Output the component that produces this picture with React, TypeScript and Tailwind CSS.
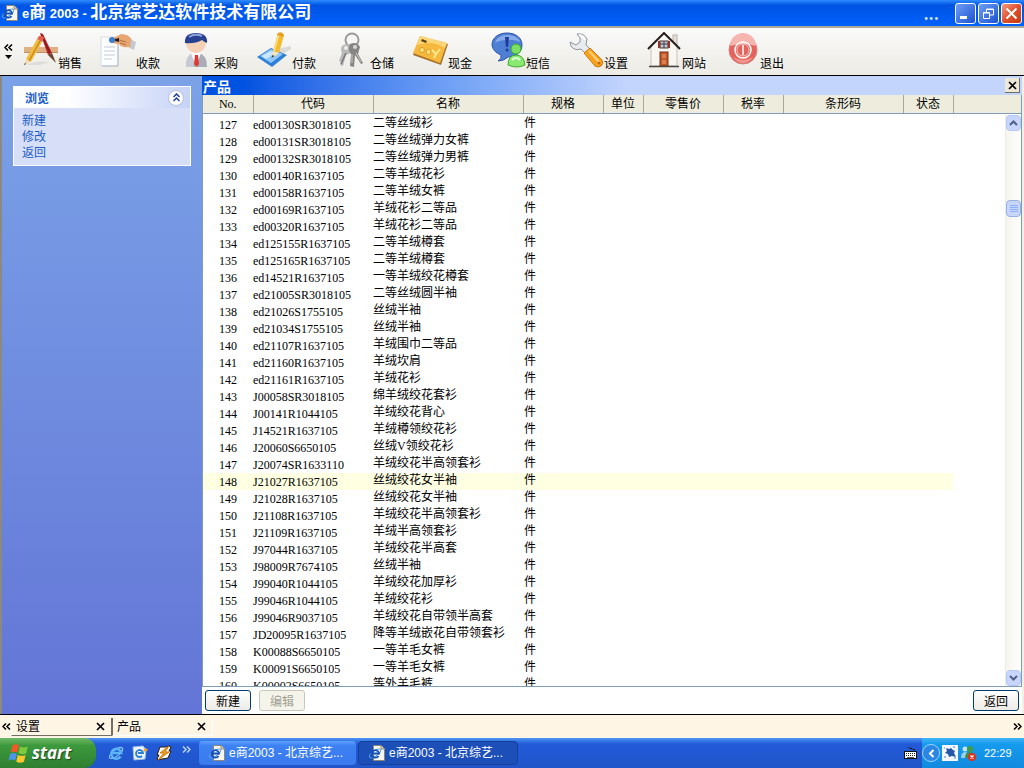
import React from "react";

interface Product {
  no: number;
  code: string;
  name: string;
}

interface ToolItem {
  label: string;
  icon: React.ReactNode;
}

const products: Product[] = [
  { no: 127, code: "ed00130SR3018105", name: "二等丝绒衫" },
  { no: 128, code: "ed00131SR3018105", name: "二等丝绒弹力女裤" },
  { no: 129, code: "ed00132SR3018105", name: "二等丝绒弹力男裤" },
  { no: 130, code: "ed00140R1637105", name: "二等羊绒花衫" },
  { no: 131, code: "ed00158R1637105", name: "二等羊绒女裤" },
  { no: 132, code: "ed00169R1637105", name: "羊绒花衫二等品" },
  { no: 133, code: "ed00320R1637105", name: "羊绒花衫二等品" },
  { no: 134, code: "ed125155R1637105", name: "二等羊绒樽套" },
  { no: 135, code: "ed125165R1637105", name: "二等羊绒樽套" },
  { no: 136, code: "ed14521R1637105", name: "一等羊绒绞花樽套" },
  { no: 137, code: "ed21005SR3018105", name: "二等丝绒圆半袖" },
  { no: 138, code: "ed21026S1755105", name: "丝绒半袖" },
  { no: 139, code: "ed21034S1755105", name: "丝绒半袖" },
  { no: 140, code: "ed21107R1637105", name: "羊绒围巾二等品" },
  { no: 141, code: "ed21160R1637105", name: "羊绒坎肩" },
  { no: 142, code: "ed21161R1637105", name: "羊绒花衫" },
  { no: 143, code: "J00058SR3018105", name: "绵羊绒绞花套衫" },
  { no: 144, code: "J00141R1044105", name: "羊绒绞花背心" },
  { no: 145, code: "J14521R1637105", name: "羊绒樽领绞花衫" },
  { no: 146, code: "J20060S6650105", name: "丝绒V领绞花衫" },
  { no: 147, code: "J20074SR1633110", name: "羊绒绞花半高领套衫" },
  { no: 148, code: "J21027R1637105", name: "丝绒绞花女半袖" },
  { no: 149, code: "J21028R1637105", name: "丝绒绞花女半袖" },
  { no: 150, code: "J21108R1637105", name: "羊绒绞花半高领套衫" },
  { no: 151, code: "J21109R1637105", name: "羊绒半高领套衫" },
  { no: 152, code: "J97044R1637105", name: "羊绒绞花半高套" },
  { no: 153, code: "J98009R7674105", name: "丝绒半袖" },
  { no: 154, code: "J99040R1044105", name: "羊绒绞花加厚衫" },
  { no: 155, code: "J99046R1044105", name: "羊绒绞花衫" },
  { no: 156, code: "J99046R9037105", name: "羊绒绞花自带领半高套" },
  { no: 157, code: "JD20095R1637105", name: "降等羊绒嵌花自带领套衫" },
  { no: 158, code: "K00088S6650105", name: "一等羊毛女裤" },
  { no: 159, code: "K00091S6650105", name: "一等羊毛女裤" },
  { no: 160, code: "K00002S6650105", name: "等外羊毛裤" },
];

const selectedNo = 148;

const headers = ["No.", "代码", "名称", "规格", "单位", "零售价", "税率", "条形码", "状态", ""];

const SalesIcon = () => (
  <svg width="36" height="36" viewBox="0 0 36 36">
    <path d="M4 33q10-5 24-3l-10 3z" fill="#dcdcdc" />
    <rect x="2" y="15" width="34" height="6" fill="#dfb083" />
    <path d="M2 20.500h34" stroke="#c08f62" />
    <path d="M18 1l3 1 9 19-4 2z" fill="#b3272b" />
    <path d="M19 2l9 19" stroke="#7c1218" />
    <path d="M26 23l4-2 4 10z" fill="#6b4733" />
    <path d="M15 7l5 3-11 20-5-3z" fill="#f2bd3c" />
    <path d="M18 9L7 29" stroke="#c9871e" strokeWidth="1.500" />
    <path d="M15 7l2-3q3-1 5 2l-2 4z" fill="#e2604c" />
    <path d="M4 27l5 3-7 3z" fill="#f1dcb5" />
    <path d="M3 31l1 1-2 1z" fill="#222" />
  </svg>
);

const ReceiptIcon = () => (
  <svg width="36" height="36" viewBox="0 0 36 36">
    <rect x="1" y="5" width="17" height="29" fill="#fcfdff" stroke="#d5dbe6" />
    <path d="M18 6v28H2" fill="none" stroke="#b3bac8" />
    <path d="M4 15h11M4 19h11M4 23h11M4 27h8" stroke="#c6cbd4" />
    <path d="M12 7l9-5q8 0 11 6l3 2-2 7-5-2q-6 1-9-3l-7-1z" fill="#e8a570" />
    <path d="M19 8l7 2M20 11l6 2" stroke="#b56f40" />
    <path d="M31 8l5 2-2 8-4-2z" fill="#c3c9cf" />
    <circle cx="12" cy="8" r="3" fill="#3c7fd0" />
    <path d="M15 7l4-1v4l-4-1z" fill="#26211e" />
  </svg>
);

const BuyerIcon = () => (
  <svg width="36" height="36" viewBox="0 0 36 36">
    <path d="M8 35q0-12 7-14h6q8 2 8 14z" fill="#a9adb9" />
    <path d="M8 35q0-12 7-14l1 14z" fill="#c7cad4" />
    <path d="M13 21h10l-5 14z" fill="#fff" />
    <path d="M17 23h3l1 9-2.500 3-2.500-3z" fill="#dc3a31" />
    <circle cx="18" cy="11" r="10" fill="#f6d1b6" />
    <path d="M7 11q-1-10 11-10t11 10q-3-1-5-3-7 4-17 3z" fill="#27408f" />
    <path d="M11 5q6-4 13-1" stroke="#8ba1dc" strokeWidth="2" fill="none" />
  </svg>
);

const PayIcon = () => (
  <svg width="36" height="36" viewBox="0 0 36 36">
    <path d="M21 17l14-3v3l-14 9z" fill="#dadada" />
    <path d="M1 25l14-9 16 7-15 12z" fill="#2f7fd9" />
    <path d="M4 24l11-7 12 5-12 9z" fill="#8fc9fa" />
    <path d="M6 24l9-5 4 2-9 6z" fill="#cbe8ff" />
    <path d="M22 1l6 2-5 18-6-2z" fill="#f6bb2d" />
    <path d="M23 2l-5 17" stroke="#fde38d" strokeWidth="1.500" />
    <path d="M22 1q4-2 6 2l-1 2-6-2z" fill="#e7a01e" />
    <path d="M17 19l6 2-7 5z" fill="#f8e4be" />
    <path d="M16.500 23l2 1-3 2z" fill="#333" />
  </svg>
);

const KeysIcon = () => (
  <svg width="36" height="36" viewBox="0 0 36 36">
    <circle cx="18" cy="8" r="6.500" fill="none" stroke="#9b9b9b" strokeWidth="2" />
    <path d="M8 14q5-4 10 0l-1 7-5 2-3 11-3-1 1-3-2-1 3-8q-2-4 0-7z" fill="#b9b9b9" />
    <path d="M12 21l-5 11" stroke="#777" strokeWidth="1.500" />
    <path d="M16 12q7-3 10 3l-2 7 5 9-2 1-6-9-1 12-4-1 1-12q-4-5-1-10z" fill="#858585" />
    <path d="M18 22v9M22 21l5 9" stroke="#c9c9c9" />
    <circle cx="12" cy="16" r="2" fill="#eee" />
    <circle cx="21" cy="15" r="2" fill="#d8d8d8" />
  </svg>
);

const CashIcon = () => (
  <svg width="36" height="36" viewBox="0 0 36 36">
    <path d="M8 5l28 7-7 21L1 23z" fill="#a6712c" />
    <path d="M8 4l27 7-7 20L1 21z" fill="#f6b93d" />
    <path d="M8 4l27 7-2 5Q20 8 5 13z" fill="#fbd679" />
    <path d="M10 7l5 2-1 2-5-2z" fill="#5c3d0e" />
    <circle cx="10" cy="18" r="2.500" fill="#ffe27a" stroke="#d99c2a" />
    <circle cx="16.500" cy="20" r="2.500" fill="#ffe27a" stroke="#d99c2a" />
    <path d="M20 18l4 4 4-5M24 22l-2 4" stroke="#ffe98c" strokeWidth="2" fill="none" />
  </svg>
);

const MessageIcon = () => (
  <svg width="36" height="36" viewBox="0 0 36 36">
    <path d="M17 1c9 0 15 5 15 12s-6 12-14 12q-4 4-10 4 4-2 3-6-8-3-9-10C2 6 8 1 17 1z" fill="#4d7fd4" stroke="#2f58a8" />
    <path d="M17 3c7 0 12 3 13 7-6-3-18-3-25 1 1-5 6-8 12-8z" fill="#86abe8" />
    <path d="M15 5h4l-1 10h-2z" fill="#1f3c9c" />
    <circle cx="17" cy="18" r="1.500" fill="#1f3c9c" />
    <circle cx="26" cy="17" r="5" fill="#79e064" stroke="#3da82e" />
    <path d="M18 33q0-10 8-10t9 10q-8 4-17 0z" fill="#8ae873" stroke="#3da82e" />
    <path d="M22 28q4-4 8 0" stroke="#e0ffd6" strokeWidth="2" fill="none" />
  </svg>
);

const SettingsIcon = () => (
  <svg width="36" height="36" viewBox="0 0 36 36">
    <path d="M9 2q7-1 10 5l-1 6 5 5-5 4-5-5Q6 19 3 14L2 10l6 3 4-3V6z" fill="#e9ebef" stroke="#8d949c" />
    <path d="M11 3q5 1 6 5" stroke="#fff" strokeWidth="2" fill="none" />
    <path d="M16 21l6-5 12 12q2 4-1 6t-6 0z" fill="#f7a11e" stroke="#cd7610" />
    <path d="M21 19l11 12" stroke="#fdd27a" strokeWidth="2" />
    <circle cx="31" cy="31" r="1.500" fill="#c06c0c" />
  </svg>
);

const HomeIcon = () => (
  <svg width="36" height="36" viewBox="0 0 36 36">
    <rect x="27" y="3" width="4" height="10" fill="#e6e0d8" stroke="#b9b1a8" />
    <path d="M5 14L18 2l13 12v20H5z" fill="#f8f6f0" stroke="#c9c3b8" />
    <path d="M2 17L18 1l16 16" fill="none" stroke="#27211e" strokeWidth="2" />
    <rect x="14" y="9" width="8" height="7" fill="#b9c8d8" stroke="#4b3b38" />
    <path d="M18 9v7M14 12h8" stroke="#4b3b38" />
    <path d="M13 9v7M23 9v7" stroke="#9c2f26" strokeWidth="2" />
    <rect x="14" y="20" width="8" height="14" fill="#c1592b" stroke="#7a3416" />
    <path d="M16 22h4v4h-4zM16 28h4v4h-4z" fill="#da8050" />
    <path d="M3 34.500h30" stroke="#4b443e" strokeWidth="1.500" />
  </svg>
);

const ExitIcon = () => (
  <svg width="36" height="36" viewBox="0 0 36 36">
    <circle cx="19" cy="18" r="14" fill="#e5635c" stroke="#cf8480" />
    <path d="M6 14a13 13 0 0 1 26 0q-12-4-26 0z" fill="#f7b5b0" />
    <path d="M9 25q10 6 20 0-4 6-10 6t-10-6z" fill="#f3948d" />
    <circle cx="19" cy="18" r="8" fill="none" stroke="#fff" strokeWidth="1.500" />
    <circle cx="19" cy="18" r="6" fill="none" stroke="#f9c6c2" />
    <path d="M19 13v10" stroke="#fff" strokeWidth="1.500" />
  </svg>
);

const PageIcon = () => (
  <svg width="16" height="16" viewBox="0 0 16 16" className="shrink-0">
    <path d="M4.500.5h7.500l3.500 3.500v11.500h-11z" fill="#f8f6ea" stroke="#8a8678" />
    <path d="M12 .5V4h3.500" fill="#d8d4c2" stroke="#8a8678" />
    <ellipse cx="6" cy="8.500" rx="6.500" ry="2.500" transform="rotate(-35 6 8.500)" fill="none" stroke="#5aa0ee" />
    <path d="M9.500 11a3.700 3.700 0 1 1 .6-2.500H3.500" fill="none" stroke="#1350b8" strokeWidth="1.800" />
  </svg>
);

const BrowserIcon = () => (
  <svg width="16" height="16" viewBox="0 0 16 16">
    <ellipse cx="8" cy="8" rx="8" ry="3" transform="rotate(-38 8 8)" fill="none" stroke="#8cc7fb" strokeWidth="1.200" />
    <path d="M12.500 11.500a5 5 0 1 1 .7-3.500H4" fill="none" stroke="#59b4f8" strokeWidth="2.500" />
  </svg>
);

const MailIcon = () => (
  <svg width="16" height="16" viewBox="0 0 16 16">
    <path d="M1 2l10-1 3 4-1 9-11 1z" fill="#eef5fd" stroke="#9cc0e8" />
    <path d="M10 11a3.500 3.500 0 1 1 1-3H6" fill="none" stroke="#2b7fd4" strokeWidth="1.800" />
    <path d="M11 5l3-2 2 2-3 2z" fill="#f0a431" />
  </svg>
);

const PlayerIcon = () => (
  <svg width="16" height="16" viewBox="0 0 16 16">
    <path d="M4 2h6l3-1 2 1-2 4h2l-3 7-6 1-4 1-1-1 2-4H1z" fill="#fff" stroke="#2b1a08" />
    <path d="M13 1L4 8h4l-6 7 11-8H9z" fill="#f4a51f" stroke="#c9780c" />
  </svg>
);

const FlagIcon = () => (
  <svg width="22" height="20" viewBox="0 0 20 18">
    <path d="M4 2q3-2 6 0L8.500 8.500Q6 7 2.500 8.500z" fill="#ee5a25" />
    <path d="M11 3q3 2 7 0l-1.500 6.500q-4 1.500-7-.5z" fill="#7ccb3c" />
    <path d="M2 10q3-2 6 0l-1.500 6q-3-2-6 0z" fill="#4d93f0" />
    <path d="M9 10.500q3 2 7 .3L14.500 17q-4 2-7-.2z" fill="#fbc82b" />
  </svg>
);

const KeyboardIcon = () => (
  <svg width="14" height="14" viewBox="0 0 14 14">
    <path d="M4 1.500h1l1 1h2l1 1h2" stroke="#111" fill="none" />
    <rect x="0.500" y="5.500" width="12" height="7" fill="#fff" stroke="#111" />
    <path d="M2 7.500h9M2 9.500h9" stroke="#222" strokeDasharray="1 1" />
    <path d="M3 11.500h7" stroke="#555" />
  </svg>
);

const PenguinIcon = () => (
  <svg width="16" height="16" viewBox="0 0 16 16">
    <rect width="16" height="16" fill="#f5f9ff" />
    <path d="M4 3l3 1 2-1 2 2 2 1-1 2 2 4-4-1-3 1-1-3-3-1 2-2z" fill="#2457a8" />
    <path d="M11 2h2M2 12h2M12 13h2M2 3h1" stroke="#4f83cf" />
  </svg>
);

const MessengerIcon = () => (
  <svg width="16" height="16" viewBox="0 0 16 16">
    <circle cx="5" cy="4" r="2.500" fill="#bfe3f5" />
    <path d="M1 13q0-6 4-6t4 6z" fill="#9fd0ea" />
    <circle cx="10" cy="4" r="3" fill="#3f9b46" />
    <path d="M5 13q0-6 5-6t5 6z" fill="#3d8f50" />
    <circle cx="12" cy="12" r="4" fill="#e0301e" />
    <path d="M10.500 10.500l3 3M13.500 10.500l-3 3" stroke="#fff" strokeWidth="1.300" />
  </svg>
);

const CrossIcon = () => (
  <svg width="9" height="9" viewBox="0 0 9 9">
    <path d="M1 1l7 7M8 1L1 8" stroke="#000" strokeWidth="1.700" />
  </svg>
);

const ChevronsIcon = ({ color, flip }: { color: string; flip?: boolean }) => (
  <svg width="9" height="7" viewBox="0 0 9 7" className={flip ? "rotate-180" : ""}>
    <path d="M4 .5l-3 3 3 3M8 .5l-3 3 3 3" fill="none" stroke={color} strokeWidth="1.500" />
  </svg>
);

const tools: ToolItem[] = [
  { label: "销售", icon: <SalesIcon /> },
  { label: "收款", icon: <ReceiptIcon /> },
  { label: "采购", icon: <BuyerIcon /> },
  { label: "付款", icon: <PayIcon /> },
  { label: "仓储", icon: <KeysIcon /> },
  { label: "现金", icon: <CashIcon /> },
  { label: "短信", icon: <MessageIcon /> },
  { label: "设置", icon: <SettingsIcon /> },
  { label: "网站", icon: <HomeIcon /> },
  { label: "退出", icon: <ExitIcon /> },
];

const TitleBar = () => (
  <header className="flex h-[26px] shrink-0 items-center bg-linear-to-b from-[#2f8bff] via-[#0054e3] via-20% to-[#0061fc] px-0.5 text-white">
    <PageIcon />
    <h1 className="ml-1 flex flex-1 items-baseline whitespace-pre font-['Liberation_Sans','Noto_Sans_CJK_SC',sans-serif] text-[13px] leading-6 font-bold">
      e<span className="text-[17px]">商</span> 2003 - <span className="text-[17px]">北京综艺达软件技术有限公司</span>
    </h1>
    <span className="mr-4 text-[16px] leading-6 font-bold text-[#c4dcff]">...</span>
    <div className="flex gap-0.5">
      <button aria-label="最小化" className="flex size-[21px] items-end rounded-[3px] border border-white bg-linear-to-br from-[#6f9df5] to-[#1c4fd0] p-1">
        <span className="h-[3px] w-[7px] bg-white" />
      </button>
      <button aria-label="还原" className="flex size-[21px] items-center justify-center rounded-[3px] border border-white bg-linear-to-br from-[#6f9df5] to-[#1c4fd0]">
        <svg width="11" height="11" viewBox="0 0 11 11">
          <path d="M3.500 4V1h7v6H7M3 1.500h8" fill="none" stroke="#fff" />
          <path d="M.5 4.500h6v6h-6zM0 5h7" fill="none" stroke="#fff" />
        </svg>
      </button>
      <button aria-label="关闭" className="flex size-[21px] items-center justify-center rounded-[3px] border border-white bg-linear-to-br from-[#f09a80] via-[#e0502c] to-[#c43a14]">
        <svg width="13" height="13" viewBox="0 0 13 13">
          <path d="M1.500 1.500l10 10M11.500 1.500l-10 10" stroke="#fff" strokeWidth="2" />
        </svg>
      </button>
    </div>
  </header>
);

const Toolbar = () => (
  <nav className="flex h-[50px] shrink-0 border-t-2 border-b border-t-[#aca899] border-b-black bg-linear-to-b from-[#fafafa] to-[#ecebe4] pl-1">
    <button aria-label="更多" className="flex w-[18px] flex-col items-start gap-1 pt-4">
      <ChevronsIcon color="#000" />
      <svg width="7" height="4" viewBox="0 0 7 4" className="ml-px">
        <path d="M0 0h7L3.500 4z" />
      </svg>
    </button>
    {tools.map((tool) => (
      <button key={tool.label} className="flex w-[78px] items-end pb-1">
        <span className="mb-[3px]">{tool.icon}</span>
        <span className="leading-4">{tool.label}</span>
      </button>
    ))}
  </nav>
);

const Sidebar = () => (
  <aside className="w-[200px] shrink-0 bg-linear-to-b from-[#7ba2e7] to-[#6375d6] px-[11px] pt-2.5">
    <section className="h-20 border border-white bg-[#d6dff7] text-[#215dc6]">
      <div className="flex h-[21px] items-center justify-between bg-linear-to-r from-white from-30% to-[#c6d3f7] pr-1.5 pl-[11px]">
        <h2 className="font-bold">浏览</h2>
        <button aria-label="折叠" className="flex size-4 items-center justify-center rounded-full border border-[#b5c0e0] bg-white">
          <svg width="7" height="9" viewBox="0 0 7 9">
            <path d="M.5 4l3-3 3 3M.5 8l3-3 3 3" fill="none" stroke="#1c3f94" strokeWidth="1.500" />
          </svg>
        </button>
      </div>
      <ul className="pt-1 pl-2 leading-4">
        <li><a href="#new">新建</a></li>
        <li><a href="#edit">修改</a></li>
        <li><a href="#back">返回</a></li>
      </ul>
    </section>
  </aside>
);

const ProductTable = () => (
  <table className="w-full table-fixed border-collapse">
    <colgroup>
      <col className="w-[50px]" />
      <col className="w-[120px]" />
      <col className="w-[150px]" />
      <col className="w-[80px]" />
      <col className="w-[40px]" />
      <col className="w-[80px]" />
      <col className="w-[60px]" />
      <col className="w-[120px]" />
      <col className="w-[50px]" />
      <col />
    </colgroup>
    <thead>
      <tr className="h-[18px] bg-[#eeeddd]">
        {headers.map((header) => (
          <th
            key={header}
            className="border-r border-b border-r-[#aca899] border-b-[#7f9db9] p-0 leading-4 font-normal last:border-r-0"
          >
            {header}
          </th>
        ))}
      </tr>
    </thead>
    <tbody className="before:block before:h-0.5">
      {products.map((product) => {
        const bg = product.no === selectedNo ? "bg-[#ffffe1]" : "";
        return (
          <tr key={product.no} className="h-[17px] leading-[15px]">
            <td className={`p-0 text-center align-bottom ${bg}`}>{product.no}</td>
            <td className={`p-0 align-bottom ${bg}`}>{product.code}</td>
            <td className={`p-0 align-top whitespace-nowrap ${bg}`}>{product.name}</td>
            <td className={`p-0 pl-px align-top ${bg}`}>件</td>
            <td colSpan={5} className={`p-0 ${bg}`} />
            <td className="p-0" />
          </tr>
        );
      })}
    </tbody>
  </table>
);

const ScrollBar = () => (
  <div className="z-10 col-start-1 row-start-1 mt-5 flex w-4 flex-col justify-self-end border-l border-[#eeede5] bg-linear-to-r from-[#f5f4ee] to-white">
    <button aria-label="向上" className="flex h-4 items-center justify-center rounded-sm border border-[#b4c8f6] bg-[#c8d6fb]">
      <svg width="9" height="6" viewBox="0 0 9 6"><path d="M1 5l3.500-3.500L8 5" fill="none" stroke="#4d6185" strokeWidth="2" /></svg>
    </button>
    <div className="mt-[69px] flex h-[17px] flex-col items-center justify-center gap-px rounded-sm border border-[#98b1e4] bg-[#c8d6fb]">
      <span className="h-px w-2 bg-[#8cb0f8]" />
      <span className="h-px w-2 bg-[#8cb0f8]" />
      <span className="h-px w-2 bg-[#8cb0f8]" />
      <span className="h-px w-2 bg-[#8cb0f8]" />
    </div>
    <button aria-label="向下" className="mt-auto flex h-4 items-center justify-center rounded-sm border border-[#b4c8f6] bg-[#c8d6fb]">
      <svg width="9" height="6" viewBox="0 0 9 6"><path d="M1 1l3.500 3.500L8 1" fill="none" stroke="#4d6185" strokeWidth="2" /></svg>
    </button>
  </div>
);

const ProductPanel = () => (
  <main className="flex min-w-0 flex-1 flex-col bg-white">
    <div className="flex h-[19px] shrink-0 items-center justify-between bg-linear-to-r from-[#0052e0] from-5% via-[#6fa0f5] via-30% to-[#c4d5fd] to-52% pr-0.5 pl-px">
      <h2 className="text-[14px] leading-4 font-bold text-white">产品</h2>
      <button aria-label="关闭" className="flex size-[15px] items-center justify-center border-r border-b border-[#716f64] bg-[#ece9d8]">
        <CrossIcon />
      </button>
    </div>
    <div className="grid min-h-0 flex-1 grid-rows-[minmax(0,1fr)] border border-t-0 border-[#7f9db9]">
      <div className="col-start-1 row-start-1 overflow-hidden font-['Liberation_Serif','Noto_Sans_CJK_SC',serif]">
        <ProductTable />
      </div>
      <ScrollBar />
    </div>
    <div className="flex h-[27px] shrink-0 items-center gap-2 pr-[3px] pl-[3px]">
      <button className="h-[21px] w-[46px] rounded-[3px] border border-[#003c74] bg-linear-to-b from-white to-[#ecebe5]">新建</button>
      <button disabled className="h-[21px] w-[46px] rounded-[3px] border border-[#c9c7ba] bg-[#f5f4ea] text-[#a1a192]">编辑</button>
      <button className="ml-auto h-[21px] w-[46px] rounded-[3px] border border-[#003c74] bg-linear-to-b from-white to-[#ecebe5]">返回</button>
    </div>
  </main>
);

const TabStrip = () => (
  <div className="flex h-6 shrink-0 items-center border-t border-black bg-[#fff5e4] px-0.5">
    <ChevronsIcon color="#000" />
    {["设置", "产品"].map((tab) => (
      <div
        key={tab}
        className="flex h-[18px] w-[101px] items-center justify-between border-r border-b border-l border-r-[#716f64] border-b-[#716f64] border-l-white px-1 last-of-type:border-r-white last-of-type:border-b-white last-of-type:border-l-[#716f64]"
      >
        <button>{tab}</button>
        <button aria-label={`关闭${tab}`} className="mr-0.5"><CrossIcon /></button>
      </div>
    ))}
    <span className="ml-auto"><ChevronsIcon color="#000" flip /></span>
  </div>
);

const Taskbar = () => (
  <footer className="flex h-[30px] shrink-0 items-center bg-linear-to-b from-[#4d95f3] via-[#2259d8] via-20% to-[#2055c8] font-['Liberation_Sans','Noto_Sans_CJK_SC',sans-serif] text-white">
    <button className="flex h-full w-[96px] items-center gap-0.5 rounded-r-xl bg-linear-to-b from-[#6fb868] via-[#3c9a3c] via-25% to-[#2f7f31] pl-2 font-['Open_Sans','Liberation_Sans',sans-serif] text-[17px] font-bold italic [text-shadow:1px_1px_1px_#1e4a1e]">
      <FlagIcon />
      start
    </button>
    <div className="ml-3 flex items-center gap-2">
      <button aria-label="浏览器"><BrowserIcon /></button>
      <button aria-label="邮件"><MailIcon /></button>
      <button aria-label="播放器"><PlayerIcon /></button>
    </div>
    <button aria-label="更多" className="mr-2 mb-2 ml-2.5"><ChevronsIcon color="#b9d4fb" flip /></button>
    <div className="flex gap-0.5">
      <button className="flex h-6 w-[157px] items-center gap-1 rounded-sm bg-linear-to-b from-[#5ea0fb] via-[#3c81f3] via-20% to-[#3a7aee] pl-2.5">
        <PageIcon />
        e商2003 - 北京综艺...
      </button>
      <button className="flex h-6 w-[160px] items-center gap-1 rounded-sm border border-[#15409a] bg-[#1d4fb9] pl-2.5">
        <PageIcon />
        e商2003 - 北京综艺...
      </button>
    </div>
    <div className="ml-auto pr-1"><KeyboardIcon /></div>
    <div className="flex h-full w-[102px] items-center gap-0.5 bg-linear-to-b from-[#3fb5f8] via-[#159bee] via-20% to-[#118ade]">
      <button aria-label="显示隐藏图标" className="flex size-[18px] items-center justify-center rounded-full border border-[#9bd5fb] bg-[#2b85e4]">
        <svg width="7" height="9" viewBox="0 0 7 9"><path d="M5.500 1L2 4.500 5.500 8" fill="none" stroke="#fff" strokeWidth="2" /></svg>
      </button>
      <PenguinIcon />
      <MessengerIcon />
      <time className="ml-1.5 text-[11px]">22:29</time>
    </div>
  </footer>
);

const App: React.FC = () => {
  return (
    <div className="flex h-screen flex-col overflow-hidden bg-[#ece9d8] font-['Noto_Sans_CJK_SC',sans-serif] text-[12px] text-black">
      <TitleBar />
      <Toolbar />
      <div className="flex min-h-0 flex-1 border-r-2 border-l-2 border-r-[#f3efe2] border-l-[#8c8a80]">
        <Sidebar />
        <ProductPanel />
      </div>
      <TabStrip />
      <Taskbar />
    </div>
  );
};

export default App;
